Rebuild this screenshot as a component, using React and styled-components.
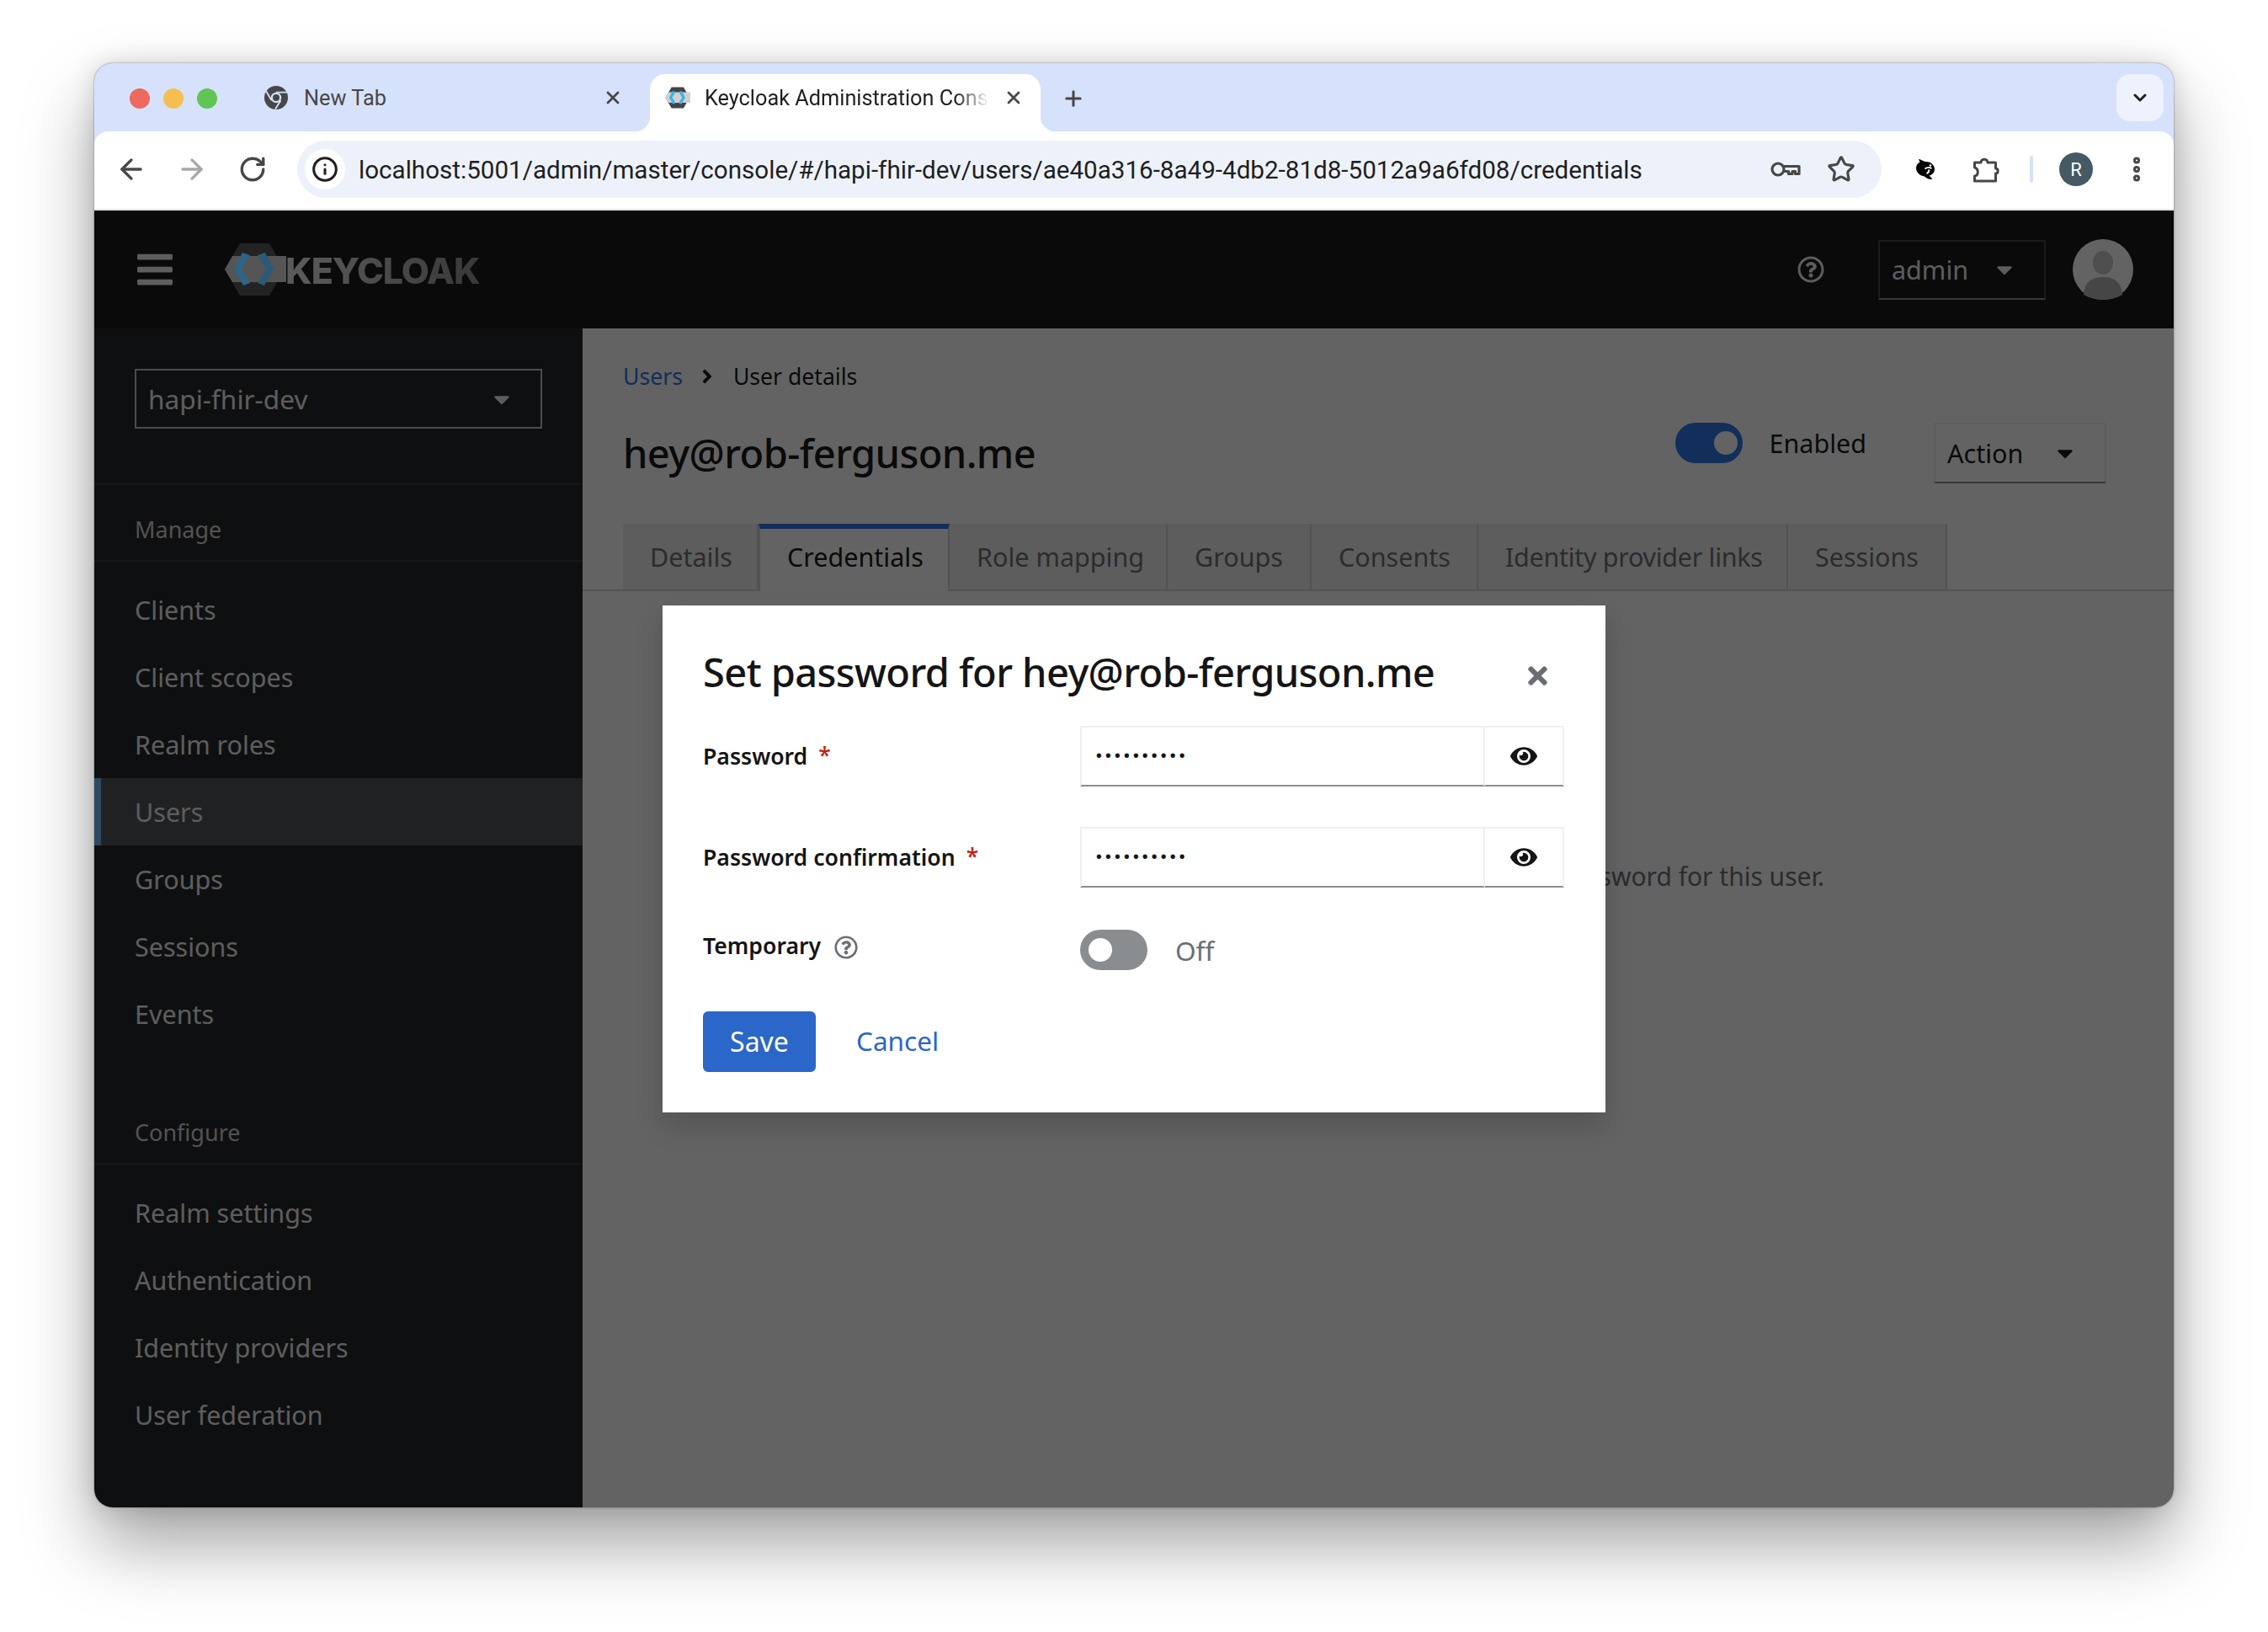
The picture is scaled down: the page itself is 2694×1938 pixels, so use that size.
import React from 'react'
import styled, { createGlobalStyle } from 'styled-components'
import { ArrowLeft, ArrowRight, RotateCw, Info, Star, EllipsisVertical, Plus, X, ChevronDown } from 'lucide-react'
import { FaAngleRight, FaBars, FaCaretDown, FaEye, FaRegQuestionCircle, FaTimes } from 'react-icons/fa'

const sans = `"Noto Sans", "Open Sans", sans-serif`
const chromeFont = `Roboto, "Liberation Sans", sans-serif`

const GlobalStyle = createGlobalStyle`
  html, body { margin: 0; padding: 0; background: #fff; }
  * { box-sizing: border-box; }
`

const Page = styled.div`
  width: 2694px;
  height: 1938px;
  padding: 75px 112px 148px;
  background: #fff;
  overflow: hidden;
`

const Window = styled.div`
  height: 1715px;
  display: flex;
  flex-direction: column;
  border-radius: 22px;
  overflow: hidden;
  background: #d6e2fb;
  box-shadow: 0 44px 84px rgba(0, 0, 0, 0.36), 0 0 30px rgba(0, 0, 0, 0.14), 0 0 2px rgba(0, 0, 0, 0.5);
`

/* chrome tab strip */
const TabStrip = styled.div`
  height: 81px;
  flex: none;
  display: flex;
  align-items: flex-start;
  padding: 13px 12px 0 42px;
`

const Lights = styled.div`
  display: flex;
  gap: 16px;
  width: 142px;
  padding-top: 17px;
`

const Light = styled.span`
  width: 24px;
  height: 24px;
  border-radius: 50%;
  background: ${p => p.$color};
`

const BrowserTab = styled.div`
  position: relative;
  width: 464px;
  height: 68px;
  padding: 0 20px 12px 18px;
  margin-right: 12px;
  display: flex;
  align-items: center;
  gap: ${p => (p.$active ? '17px' : '19px')};
  font: 400 25.3px ${chromeFont};
  color: ${p => (p.$active ? '#1f1f1f' : '#474747')};
  background: ${p => (p.$active ? '#fff' : 'transparent')};
  border-radius: 18px 18px 0 0;

  ${p => p.$active && `
    &::before, &::after {
      content: '';
      position: absolute;
      bottom: 0;
      width: 18px;
      height: 18px;
    }
    &::before { left: -18px; background: radial-gradient(circle at 0 0, transparent 18px, #fff 18.5px); }
    &::after { right: -18px; background: radial-gradient(circle at 100% 0, transparent 18px, #fff 18.5px); }
  `}
`

const TabTitle = styled.span`
  flex: 1;
  min-width: 0;
  white-space: nowrap;
  overflow: hidden;
  ${p => p.$fade && `
    -webkit-mask-image: linear-gradient(to right, #000 88%, transparent 100%);
    mask-image: linear-gradient(to right, #000 88%, transparent 100%);
  `}
`

const TabClose = styled.span`
  display: flex;
  color: #474747;
`

const NewTab = styled.span`
  display: flex;
  margin: 15px 0 0 13px;
  color: #474747;
`

const TabSearch = styled.span`
  margin-left: auto;
  width: 56px;
  height: 56px;
  display: flex;
  align-items: center;
  justify-content: center;
  background: #edf2fc;
  border-radius: 16px;
  color: #1f1f1f;
`

/* chrome toolbar */
const Toolbar = styled.div`
  height: 94px;
  flex: none;
  display: flex;
  align-items: center;
  padding: 0 8px 2px 8px;
  background: #fff;
  border-radius: 16px 16px 0 0;
  border-bottom: 2px solid #e3e5e8;
`

const ToolButton = styled.span`
  width: 72px;
  height: 72px;
  flex: none;
  display: flex;
  align-items: center;
  justify-content: center;
  color: ${p => (p.$disabled ? '#a9a9a9' : '#474747')};
`

const Omnibox = styled.div`
  flex: 1;
  height: 68px;
  margin: 0 16px 0 17px;
  padding: 0 31px 0 9px;
  display: flex;
  align-items: center;
  background: #edf2fa;
  border-radius: 34px;
`

const SiteInfo = styled.span`
  width: 48px;
  height: 48px;
  flex: none;
  display: flex;
  align-items: center;
  justify-content: center;
  border-radius: 50%;
  background: #fff;
  color: #1f1f1f;
`

const Url = styled.span`
  flex: 1;
  margin-left: 16px;
  padding-top: 2px;
  font: 400 29.6px ${chromeFont};
  color: #1f1f1f;
  white-space: nowrap;
`

const OmniIcons = styled.span`
  display: flex;
  align-items: center;
  gap: 31px;
  color: #474747;
`

const ToolDivider = styled.span`
  width: 4px;
  height: 32px;
  margin: 0 15px 0 16px;
  border-radius: 2px;
  background: #d6e2fb;
`

const ProfileBadge = styled.span`
  width: 40px;
  height: 40px;
  display: flex;
  align-items: center;
  justify-content: center;
  border-radius: 50%;
  background: #455a64;
  color: #fff;
  font: 400 22px ${chromeFont};
`

/* keycloak page */
const Viewport = styled.div`
  position: relative;
  flex: 1;
  min-height: 0;
  display: flex;
  flex-direction: column;
  background: #fff;
`

const Masthead = styled.header`
  height: 140px;
  flex: none;
  display: flex;
  align-items: center;
  padding: 0 48px;
  background: #151515;
  color: #f0f0f0;
`

const Burger = styled.span`
  display: flex;
  width: 106px;
  color: #f0f0f0;
`

/* sits over the backdrop, so its colours are the dimmed ones */
const Brand = styled.div`
  position: relative;
  z-index: 1;
  display: flex;
  align-items: center;
`

const BrandName = styled.span`
  margin-left: -1px;
  padding-top: 2px;
  font: 800 43px Inter, sans-serif;
  letter-spacing: -1.1px;
  background: linear-gradient(to right, #5c5c5c, #383838);
  -webkit-background-clip: text;
  background-clip: text;
  color: transparent;
`

const MastheadTools = styled.div`
  margin-left: auto;
  display: flex;
  align-items: center;
`

const HelpIcon = styled.span`
  display: flex;
  margin-right: 64px;
  color: #f0f0f0;
`

const Dropdown = styled.div`
  display: flex;
  align-items: center;
  justify-content: space-between;
  width: ${p => p.$width}px;
  height: ${p => p.$height}px;
  padding: 0 ${p => p.$end}px 0 14px;
  font: 400 30.5px ${sans};
  color: ${p => p.$color};
  border: 2px solid ${p => p.$line};
  border-bottom-color: ${p => p.$under};
`

const RealmName = styled.span`
  font-size: 31.6px;
`

const Avatar = styled.svg`
  margin-left: 32px;
  display: block;
`

const Body = styled.div`
  flex: 1;
  min-height: 0;
  display: flex;
`

const Sidebar = styled.nav`
  width: 580px;
  flex: none;
  background: #212427;
  color: #f0f0f0;
`

const RealmBox = styled.div`
  height: 186px;
  padding: 48px 48px 0;
  border-bottom: 2px solid #33363a;
`

const SectionLabel = styled.div`
  height: 91px;
  margin-top: ${p => p.$gap || 0}px;
  padding: 34px 48px 0;
  font: 400 27px/38px ${sans};
  color: #d2d2d2;
  border-bottom: 2px solid #33363a;
`

const NavList = styled.div`
  padding-top: 17px;
`

const NavItem = styled.div`
  height: 80px;
  display: flex;
  align-items: center;
  padding-left: ${p => (p.$active ? '40px' : '48px')};
  font: 400 30.5px ${sans};
  color: #f0f0f0;
  background: ${p => (p.$active ? '#4f5255' : 'transparent')};
  border-left: ${p => (p.$active ? '8px solid #73bcf7' : '0')};
`

const Main = styled.main`
  flex: 1;
  min-width: 0;
  background: #fff;
  color: #151515;
`

const Breadcrumb = styled.div`
  display: flex;
  align-items: center;
  height: 44px;
  margin: 35px 0 0 48px;
  font: 400 26.6px ${sans};
`

const CrumbLink = styled.span`
  color: #2a74e8;
`

const CrumbSep = styled.span`
  display: flex;
  margin: 0 18px 0 16px;
  color: #151515;
`

const TitleRow = styled.div`
  height: 72px;
  margin: 33px 80px 0 48px;
  display: flex;
  align-items: center;
`

const PageTitle = styled.h1`
  margin: 0;
  flex: 1;
  font: 500 47px ${sans};
  letter-spacing: -0.6px;
  color: #151515;
`

const Switch = styled.span`
  display: block;
  position: relative;
  flex: none;
  width: 80px;
  height: 48px;
  border-radius: 24px;
  background: ${p => (p.$on ? '#2a74e8' : '#8a8d90')};

  &::after {
    content: '';
    position: absolute;
    top: 10px;
    left: ${p => (p.$on ? '46px' : '10px')};
    width: 28px;
    height: 28px;
    border-radius: 50%;
    background: #fff;
  }
`

const EnabledSwitch = styled.div`
  align-self: flex-start;
  display: flex;
  align-items: center;
  gap: 31px;
  margin-right: 80px;
  font: 400 30.5px ${sans};
`

const TabBar = styled.div`
  height: 80px;
  margin-top: 48px;
  padding-left: 48px;
  display: flex;
  border-bottom: 2px solid #d2d2d2;
`

const PageTab = styled.div`
  width: ${p => p.$width}px;
  height: ${p => (p.$active ? '80px' : '78px')};
  display: flex;
  align-items: center;
  padding: ${p => (p.$active ? '0 0 8px 32px' : '0 0 0 32px')};
  font: 400 30.5px ${sans};
  letter-spacing: ${p => p.$track || 0}px;
  white-space: nowrap;
  color: ${p => (p.$active ? '#151515' : '#6a6e73')};
  background: ${p => (p.$active ? '#fff' : '#f0f0f0')};
  border-right: 2px solid #d2d2d2;
  border-top: ${p => (p.$active ? '6px solid #2a74e8' : '0')};
  border-left: ${p => (p.$active ? '2px solid #d2d2d2' : '0')};
`

const EmptyState = styled.div`
  padding-top: 230px;
  text-align: center;
`

const EmptyTitle = styled.h2`
  margin: 0 0 31px;
  font: 400 38px/56px ${sans};
`

const EmptyBody = styled.p`
  margin: 0;
  font: 400 30px/44px ${sans};
  color: #6a6e73;
  white-space: nowrap;
`

/* modal */
const Backdrop = styled.div`
  position: absolute;
  inset: 0;
  display: flex;
  align-items: center;
  justify-content: center;
  background: rgba(3, 3, 3, 0.62);
`

const Dialog = styled.div`
  position: relative;
  z-index: 2;
  width: 1120px;
  height: 602px;
  padding: 48px 49px 48px 48px;
  background: #fff;
  box-shadow: 0 16px 32px rgba(3, 3, 3, 0.16);
  display: flex;
  flex-direction: column;
`

const DialogHeader = styled.div`
  display: flex;
  align-items: center;
  justify-content: space-between;
  height: 62px;
  margin-bottom: 33px;
  padding-right: 15px;
`

const DialogTitle = styled.h1`
  margin: 0;
  font: 500 47px ${sans};
  letter-spacing: -0.6px;
  color: #151515;
`

const CloseButton = styled.span`
  display: flex;
  margin-top: 8px;
  color: #6a6e73;
`

const Form = styled.div`
  display: flex;
  flex-direction: column;
  gap: 48px;
`

const FieldRow = styled.div`
  display: grid;
  grid-template-columns: 448px 1fr;
  align-items: ${p => (p.$top ? 'flex-start' : 'center')};
  margin-top: ${p => (p.$top ? '2px' : '0')};
`

const Label = styled.label`
  display: flex;
  align-items: center;
  font: 600 26.6px/38px ${sans};
  color: #151515;
`

const Required = styled.span`
  margin-left: 13px;
  color: #c9190b;
  font-weight: 500;
  position: relative;
  top: -1px;
`

const LabelHelp = styled.span`
  display: flex;
  margin: 4px 0 0 16px;
  color: #6a6e73;
`

const InputGroup = styled.div`
  display: flex;
  height: 72px;
`

const PasswordInput = styled.input`
  flex: 1;
  min-width: 0;
  padding: 0 16px;
  font: 400 26px Roboto, sans-serif;
  letter-spacing: 2.2px;
  color: #151515;
  background: #fff;
  border: 2px solid #f0f0f0;
  border-bottom-color: #8a8d90;
  border-radius: 0;
  outline: none;
`

const EyeButton = styled.span`
  width: 94px;
  flex: none;
  display: flex;
  align-items: center;
  justify-content: center;
  color: #151515;
  border: 2px solid #f0f0f0;
  border-left: 0;
  border-bottom-color: #8a8d90;
`

const SwitchRow = styled.div`
  display: flex;
  align-items: center;
  gap: 33px;
  font: 400 31.5px ${sans};
  color: #6a6e73;
`

const Actions = styled.div`
  display: flex;
  align-items: center;
  gap: 48px;
  margin-top: 1px;
`

const SaveButton = styled.button`
  width: 134px;
  height: 72px;
  padding: 0 0 2px;
  border: 0;
  border-radius: 6px;
  background: #2b66c9;
  color: #fff;
  font: 400 32px ${sans};
`

const CancelLink = styled.span`
  padding-bottom: 3px;
  font: 400 31.5px ${sans};
  color: #2b66c9;
`

/* drawings */
function ChromeMark() {
  return (
    <svg width="28" height="28" viewBox="0 0 28 28">
      <circle cx="14" cy="14" r="14" fill="#45474a" />
      <circle cx="14" cy="14" r="6.2" fill="#d6e2fb" />
      <circle cx="14" cy="14" r="4" fill="#45474a" />
      <path d="M14 7.6H27M8.5 17.2 2.2 6.2M19.5 17.2 13 27.6" stroke="#d6e2fb" strokeWidth="1.8" fill="none" />
    </svg>
  )
}

function KeycloakMark({ width, height, hex, band, left, right }) {
  return (
    <svg width={width} height={height} viewBox="0 0 74 62">
      <polygon points="1,31 19,0 54,0 72,31 54,62 19,62" fill={hex} />
      <polygon points="1,31 10,15 74,15 74,46 10,46" fill={band} />
      <polygon points="22,11 12,30.5 23,50 31,47 21,30.5 31,14" fill={left} />
      <polygon points="49,11 59,30.5 48,50 40,47 50,30.5 40,14" fill={right} />
    </svg>
  )
}

function KeyIcon() {
  return (
    <svg width="37" height="24" viewBox="0 0 36 24" fill="none" stroke="currentColor" strokeWidth="3.2" strokeLinejoin="round">
      <circle cx="9.5" cy="12" r="7" />
      <path d="M16.5 8.500H34.500V17.500H30V14.500H26.500V17.500H22V14.500H16" />
    </svg>
  )
}

function DolphinIcon() {
  return (
    <svg width="24" height="26" viewBox="0 0 24 26">
      <path d="M4 1C8 1.500 10 4 13 4C18.500 4 23 8 23 13C23 17 19.500 20 16.500 20.500L20.500 24.500C16.500 25.800 13 23.500 11 21.500C5 20.500 1 16.500 1 11.500C1 8 3 6 5.500 4.500Z" fill="#000" />
      <path d="M11.500 12.500C14 10.500 17 10.500 19.500 12M16 13.500C16.500 16 15 17.500 13.500 18" stroke="#fff" strokeWidth="1.900" fill="none" />
      <circle cx="18" cy="8.500" r="1.300" fill="#fff" />
    </svg>
  )
}

function PuzzleIcon() {
  return (
    <svg width="32" height="32" viewBox="0 0 32 32" fill="none" stroke="#474747" strokeWidth="3" strokeLinejoin="round">
      <path d="M2.500 8H10C10 3 18 3 18 8H27.500V15C31 15 31 21 27.500 21V30H2.500V24C7.500 23.500 7.500 15 2.500 14Z" />
    </svg>
  )
}

function UserAvatar() {
  return (
    <Avatar width="72" height="72" viewBox="0 0 72 72">
      <circle cx="36" cy="36" r="36" fill="#fff" />
      <ellipse cx="36" cy="28" rx="12" ry="14" fill="#c8c8c8" />
      <path d="M13 66C14 50 24 45 36 45C48 45 58 50 59 66C52 70 44 72 36 72C28 72 20 70 13 66Z" fill="#b4b4b4" />
    </Avatar>
  )
}

const manageLinks = ['Clients', 'Client scopes', 'Realm roles', 'Users', 'Groups', 'Sessions', 'Events']
const configureLinks = ['Realm settings', 'Authentication', 'Identity providers', 'User federation']
const pageTabs = [
  { name: 'Details', width: 161 },
  { name: 'Credentials', width: 227 },
  { name: 'Role mapping', width: 259 },
  { name: 'Groups', width: 171 },
  { name: 'Consents', width: 198 },
  { name: 'Identity provider links', width: 368, track: -0.3 },
  { name: 'Sessions', width: 189 },
]

function PasswordField({ value }) {
  return (
    <InputGroup>
      <PasswordInput type="password" value={value} readOnly />
      <EyeButton>
        <FaEye size={32} />
      </EyeButton>
    </InputGroup>
  )
}

export default function App() {
  return (
    <Page>
      <GlobalStyle />
      <Window>
        <TabStrip>
          <Lights>
            <Light $color="#ed6a5e" />
            <Light $color="#f4bf4f" />
            <Light $color="#61c554" />
          </Lights>
          <BrowserTab>
            <ChromeMark />
            <TabTitle>New Tab</TabTitle>
            <TabClose><X size={24} strokeWidth={2.8} /></TabClose>
          </BrowserTab>
          <BrowserTab $active>
            <KeycloakMark width={30} height={26} hex="#444" band="#d0d0d0" left="#37b5e8" right="#37b5e8" />
            <TabTitle $fade>Keycloak Administration Console</TabTitle>
            <TabClose><X size={24} strokeWidth={2.8} /></TabClose>
          </BrowserTab>
          <NewTab><Plus size={28} strokeWidth={2.6} /></NewTab>
          <TabSearch><ChevronDown size={24} strokeWidth={3} /></TabSearch>
        </TabStrip>

        <Toolbar>
          <ToolButton><ArrowLeft size={38} strokeWidth={2.1} /></ToolButton>
          <ToolButton $disabled><ArrowRight size={38} strokeWidth={2.1} /></ToolButton>
          <ToolButton><RotateCw size={34} strokeWidth={2.4} /></ToolButton>
          <Omnibox>
            <SiteInfo><Info size={32} strokeWidth={2.3} /></SiteInfo>
            <Url>localhost:5001/admin/master/console/#/hapi-fhir-dev/users/ae40a316-8a49-4db2-81d8-5012a9a6fd08/credentials</Url>
            <OmniIcons>
              <KeyIcon />
              <Star size={34} strokeWidth={2.2} />
            </OmniIcons>
          </Omnibox>
          <ToolButton><DolphinIcon /></ToolButton>
          <ToolButton><PuzzleIcon /></ToolButton>
          <ToolDivider />
          <ToolButton><ProfileBadge>R</ProfileBadge></ToolButton>
          <ToolButton><EllipsisVertical size={36} strokeWidth={3.4} /></ToolButton>
        </Toolbar>

        <Viewport>
          <Masthead>
            <Burger><FaBars size={48} /></Burger>
            <Brand>
              <KeycloakMark width={74} height={62} hex="#232323" band="#555" left="#2e6585" right="#2a5a78" />
              <BrandName>KEYCLOAK</BrandName>
            </Brand>
            <MastheadTools>
              <HelpIcon><FaRegQuestionCircle size={32} /></HelpIcon>
              <Dropdown $width={199} $height={71} $end={32} $color="#f0f0f0" $line="#444" $under="#8a8d90">
                admin
                <FaCaretDown size={30} />
              </Dropdown>
              <UserAvatar />
            </MastheadTools>
          </Masthead>

          <Body>
            <Sidebar>
              <RealmBox>
                <Dropdown $width={484} $height={71} $end={31} $color="#f0f0f0" $line="#c0c0c0" $under="#c0c0c0">
                  <RealmName>hapi-fhir-dev</RealmName>
                  <FaCaretDown size={30} />
                </Dropdown>
              </RealmBox>
              <SectionLabel>Manage</SectionLabel>
              <NavList>
                {manageLinks.map(link => (
                  <NavItem key={link} $active={link === 'Users'}>{link}</NavItem>
                ))}
              </NavList>
              <SectionLabel $gap={48}>Configure</SectionLabel>
              <NavList>
                {configureLinks.map(link => (
                  <NavItem key={link}>{link}</NavItem>
                ))}
              </NavList>
            </Sidebar>

            <Main>
              <Breadcrumb>
                <CrumbLink>Users</CrumbLink>
                <CrumbSep><FaAngleRight size={26} /></CrumbSep>
                User details
              </Breadcrumb>
              <TitleRow>
                <PageTitle>hey@rob-ferguson.me</PageTitle>
                <EnabledSwitch>
                  <Switch $on />
                  Enabled
                </EnabledSwitch>
                <Dropdown $width={205} $height={72} $end={32} $color="#151515" $line="#f0f0f0" $under="#8a8d90">
                  Action
                  <FaCaretDown size={30} />
                </Dropdown>
              </TitleRow>
              <TabBar>
                {pageTabs.map(tab => (
                  <PageTab key={tab.name} $width={tab.width} $track={tab.track} $active={tab.name === 'Credentials'}>{tab.name}</PageTab>
                ))}
              </TabBar>
              <EmptyState>
                <EmptyTitle>No credentials</EmptyTitle>
                <EmptyBody>This user doesn't have any credentials. You can set a password for this user.</EmptyBody>
              </EmptyState>
            </Main>
          </Body>

          <Backdrop>
            <Dialog>
              <DialogHeader>
                <DialogTitle>Set password for hey@rob-ferguson.me</DialogTitle>
                <CloseButton><FaTimes size={33} /></CloseButton>
              </DialogHeader>
              <Form>
                <FieldRow>
                  <Label>Password<Required>*</Required></Label>
                  <PasswordField value="password12" />
                </FieldRow>
                <FieldRow>
                  <Label>Password confirmation<Required>*</Required></Label>
                  <PasswordField value="password12" />
                </FieldRow>
                <FieldRow $top>
                  <Label>Temporary<LabelHelp><FaRegQuestionCircle size={28} /></LabelHelp></Label>
                  <SwitchRow>
                    <Switch />
                    Off
                  </SwitchRow>
                </FieldRow>
                <Actions>
                  <SaveButton>Save</SaveButton>
                  <CancelLink>Cancel</CancelLink>
                </Actions>
              </Form>
            </Dialog>
          </Backdrop>
        </Viewport>
      </Window>
    </Page>
  )
}
